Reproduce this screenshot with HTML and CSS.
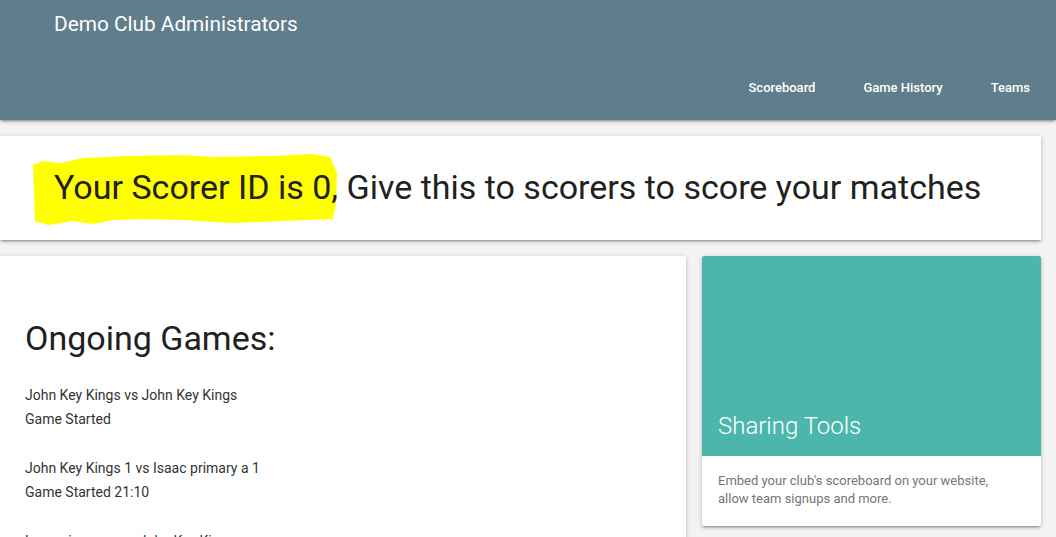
FILE: index.html
```html
<!DOCTYPE html>
<html lang="en">
<head>
<meta charset="utf-8">
<title>Demo Club Administrators</title>
<link rel="stylesheet" href="styles.css">
</head>
<body>
<header class="topbar">
  <div class="brand">Demo Club Administrators</div>
  <nav class="nav">
    <a href="#">Scoreboard</a>
    <a href="#">Game History</a>
    <a href="#">Teams</a>
  </nav>
</header>
<main class="main">
  <section class="banner">
    <span class="hl">Your Scorer ID is 0</span>, Give this to scorers to score your matches
  </section>
  <div class="grid">
    <section class="card games">
      <h2 class="games-title">Ongoing Games:</h2>
      <p class="game">John Key Kings vs John Key Kings<br>Game Started</p>
      <p class="game">John Key Kings 1 vs Isaac primary a 1<br>Game Started 21:10</p>
      <p class="game">Lorem ipsum a vs John Key Kings<br>Game Started</p>
    </section>
    <aside class="card share">
      <div class="share-top">
        <span class="share-title">Sharing Tools</span>
      </div>
      <div class="share-body">
        <p>Embed your club's scoreboard on your website, allow team signups and more.</p>
      </div>
    </aside>
  </div>
</main>
</body>
</html>
```

FILE: styles.css
```css
* { box-sizing: border-box; }
html, body { margin: 0; padding: 0; }
body {
  background: #f3f3f3;
  font-family: Roboto, "Liberation Sans", sans-serif;
  color: rgba(0,0,0,0.87);
  overflow: hidden;
  height: 537px;
}
.topbar {
  height: 120px;
  background: #607d8b;
  color: #fff;
  display: flex;
  flex-direction: column;
  justify-content: space-between;
  box-shadow: 0 2px 2px 0 rgba(0,0,0,.14), 0 3px 1px -2px rgba(0,0,0,.12), 0 1px 5px 0 rgba(0,0,0,.2);
  position: relative;
  z-index: 2;
}
.brand {
  padding: 12px 0 0 54px;
  font-size: 20.8px;
  line-height: 24px;
}
.nav {
  display: flex;
  justify-content: flex-end;
  gap: 48px;
  padding-right: 26px;
}
.nav a {
  color: #fff;
  text-decoration: none;
  font-size: 13px;
  font-weight: 500;
  line-height: 64px;
}
.main {
  padding: 16px 15px 0 0;
}
.banner {
  position: relative;
  z-index: 0;
  background: #fff;
  height: 104px;
  padding: 31px 0 0 54px;
  font-size: 34px;
  line-height: 40px;
  color: #212121;
  box-shadow: 0 2px 2px 0 rgba(0,0,0,.14), 0 3px 1px -2px rgba(0,0,0,.12), 0 1px 5px 0 rgba(0,0,0,.2);
}
.hl {
  position: relative;
}
.hl::before {
  content: "";
  position: absolute;
  z-index: -1;
  left: -21px;
  top: -14px;
  width: 304px;
  height: 72px;
  background: #ffff00;
  clip-path: polygon(0px 12px, 10px 8px, 28px 10px, 50px 5px, 95px 3px, 150px 2px, 180px 4px, 240px 3px, 280px 1px, 297px 4px, 304px 20px, 303px 50px, 300px 66px, 250px 68px, 200px 70px, 150px 67px, 110px 66px, 80px 67px, 60px 71px, 40px 68px, 15px 72px, 2px 68px);
}
.grid {
  display: grid;
  grid-template-columns: 686px 339px;
  gap: 16px;
  margin-top: 16px;
  align-items: start;
}
.card {
  background: #fff;
  border-radius: 2px;
  box-shadow: 0 2px 2px 0 rgba(0,0,0,.14), 0 3px 1px -2px rgba(0,0,0,.12), 0 1px 5px 0 rgba(0,0,0,.2);
}
.games {
  padding: 63px 25px 0 25px;
  min-height: 320px;
}
.games-title {
  margin: 0 0 25px;
  font-size: 34px;
  font-weight: 400;
  line-height: 38.5px;
  color: #212121;
}
.game {
  margin: 0 0 25px;
  font-size: 14px;
  line-height: 24px;
  color: #333;
}
.share {
  overflow: hidden;
}
.share-top {
  height: 200px;
  background: #4db6ac;
  display: flex;
  align-items: flex-end;
  padding: 0 16px 14px;
}
.share-title {
  color: #fff;
  font-size: 24px;
  font-weight: 300;
  line-height: 32px;
}
.share-body {
  padding: 16px 40px 18px 16px;
}
.share-body p {
  margin: 0;
  font-size: 13px;
  line-height: 18px;
  color: #757575;
}
```
